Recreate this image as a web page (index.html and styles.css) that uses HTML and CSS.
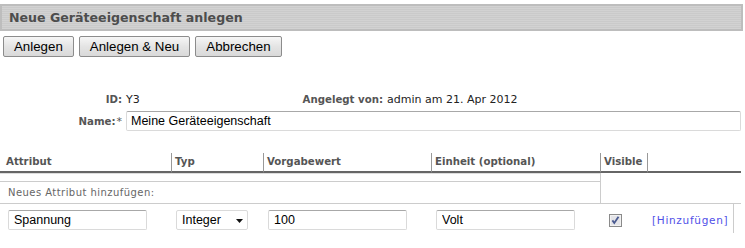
FILE: index.html
```html
<!DOCTYPE html>
<html lang="de">
<head>
    <meta charset="UTF-8">
    <title>Neue Geräteeigenschaft anlegen</title>
    <link rel="stylesheet" href="styles.css">
</head>
<body>
    <div class="title-bar">Neue Geräteeigenschaft anlegen</div>

    <div class="toolbar">
        <button class="btn">Anlegen</button>
        <button class="btn">Anlegen &amp; Neu</button>
        <button class="btn">Abbrechen</button>
    </div>

    <table class="info">
        <colgroup>
            <col style="width:126px">
            <col style="width:171px">
            <col style="width:90px">
            <col>
        </colgroup>
        <tr class="info-row">
            <th>ID:</th>
            <td>Y3</td>
            <th>Angelegt von:</th>
            <td>admin am 21. Apr 2012</td>
        </tr>
        <tr class="name-row">
            <th>Name:<span class="req">*</span></th>
            <td colspan="3"><input type="text" class="field field-wide" value="Meine Geräteeigenschaft"></td>
        </tr>
    </table>

    <table class="attrs">
        <colgroup>
            <col style="width:171px">
            <col style="width:92px">
            <col style="width:168px">
            <col style="width:169px">
            <col style="width:47px">
            <col style="width:87px">
            <col style="width:7px">
        </colgroup>
        <tr class="head">
            <th class="first">Attribut</th>
            <th>Typ</th>
            <th>Vorgabewert</th>
            <th>Einheit (optional)</th>
            <th>Visible</th>
            <th colspan="2"></th>
        </tr>
        <tr class="spacer">
            <td colspan="4"></td>
            <td class="vis-blank" rowspan="2"></td>
            <td class="blank" colspan="2" rowspan="2"></td>
        </tr>
        <tr class="new-label">
            <td colspan="4">Neues Attribut hinzufügen:</td>
        </tr>
        <tr class="new-row">
            <td class="first"><input type="text" class="field" value="Spannung"></td>
            <td>
                <span class="select-wrap">
                    <select class="select">
                        <option>Integer</option>
                        <option>String</option>
                        <option>Boolean</option>
                    </select>
                    <svg class="caret" width="7" height="4" viewBox="0 0 7 4"><path d="M0 0h7L3.5 4z" fill="#111"/></svg>
                </span>
            </td>
            <td><input type="text" class="field" value="100"></td>
            <td><input type="text" class="field" value="Volt"></td>
            <td class="vis">
                <span class="check">
                    <svg width="13" height="13" viewBox="0 0 13 13">
                        <rect x="0.5" y="0.5" width="12" height="12" fill="#d6d6d8" stroke="#8a8a8a"/>
                        <rect x="1.5" y="1.5" width="10" height="10" fill="#e4e4e8" stroke="#f2f2f2"/>
                        <path d="M3.4 6.4l1.9 2.6 4.2-6.2" fill="none" stroke="#4a5a90" stroke-width="1.8"/>
                    </svg>
                </span>
            </td>
            <td class="action"><a href="#" class="add-link">[Hinzufügen]</a></td>
            <td class="blank"></td>
        </tr>
    </table>
</body>
</html>
```
FILE: styles.css
```css
* {
    box-sizing: border-box;
}

body {
    font-family: "DejaVu Sans", Verdana, sans-serif;
    font-size: 11px;
    margin: 0;
    padding: 0;
    width: 745px;
    background: #fff;
    color: #222;
}

.title-bar {
    margin: 4px 2px 0 0;
    height: 27px;
    border: 2px solid #bdbdbd;
    background: repeating-linear-gradient(to bottom, #d2d2d2 0, #d2d2d2 1px, #cacaca 1px, #cacaca 2px);
    color: #4d4d4d;
    font-weight: bold;
    font-size: 12.6px;
    line-height: 24px;
    padding-left: 7px;
}

.toolbar {
    display: flex;
    gap: 5px;
    padding-left: 3px;
    margin-top: 5px;
}

.btn {
    font-family: "Liberation Sans", Arial, sans-serif;
    font-size: 13.3px;
    height: 21px;
    padding: 0 10px;
    border: 1px solid #8c8c8c;
    border-radius: 2px;
    background: linear-gradient(to bottom, #f6f6f6, #e4e4e4 50%, #d9d9d9);
    color: #000;
    line-height: 19px;
}

/* ID / Name block */
.info {
    table-layout: fixed;
    width: 741px;
    border-collapse: collapse;
    margin-top: 36px;
}

.info th,
.info td {
    padding: 0;
    white-space: nowrap;
}

.info th {
    text-align: right;
    padding-right: 4px;
    color: #555;
    font-weight: bold;
    font-size: 10.2px;
}

.info-row th,
.info-row td {
    height: 14px;
    line-height: 14px;
}

.name-row th,
.name-row td {
    padding-top: 4px;
}

.req {
    font-weight: normal;
    font-size: 11px;
    margin-left: 1px;
}

.field {
    font-family: "Liberation Sans", Arial, sans-serif;
    font-size: 12.5px;
    height: 20px;
    width: 139px;
    padding: 0 5px;
    border: 1px solid #dadada;
    border-top-color: #a8a8a8;
    border-radius: 2px;
    color: #000;
    background: #fff;
}

.field-wide {
    width: 615px;
    padding-left: 4px;
}

/* attribute table */
.attrs {
    table-layout: fixed;
    width: 741px;
    border-collapse: separate;
    border-spacing: 0;
    margin-top: 22px;
}

.attrs th,
.attrs td {
    padding: 0;
    white-space: nowrap;
}

.head th {
    height: 20px;
    text-align: left;
    font-weight: bold;
    font-size: 10.2px;
    color: #555;
    padding-left: 3px;
    border-left: 1px solid #999;
    border-bottom: 2px solid #666;
    line-height: 18px;
}

.head th.first {
    padding-left: 6px;
    border-left: none;
}

.spacer td {
    height: 9px;
    border-top: 1px solid #ddd;
    border-bottom: 1px solid #ccc;
}

.spacer .vis-blank {
    border-top: none;
    border-left: 1px solid #ccc;
    border-bottom: 1px solid #ccc;
}

.spacer .blank {
    border-top: none;
    border-bottom: 1px solid #ccc;
}

.new-label td {
    height: 22px;
    color: #666;
    font-size: 10px;
    letter-spacing: 0.45px;
    padding-left: 8px;
    border-bottom: 1px solid #ccc;
}

.new-row td {
    height: 29px;
    padding-left: 5px;
    padding-top: 3px;
    vertical-align: middle;
}

.new-row td.first {
    padding-left: 8px;
}

.new-row td.vis {
    padding-left: 9px;
}

.new-row td.action {
    border-right: 1px solid #ccc;
}

.new-row td.blank {
    padding: 0;
}

.check {
    display: inline-block;
    width: 13px;
    height: 13px;
    vertical-align: middle;
}

.check svg {
    display: block;
}

.select-wrap {
    position: relative;
    display: inline-block;
}

.select {
    appearance: none;
    -webkit-appearance: none;
    font-family: "Liberation Sans", Arial, sans-serif;
    font-size: 12.5px;
    width: 72px;
    height: 20px;
    padding: 0 0 0 5px;
    border: 1px solid #dadada;
    border-radius: 2px;
    background: #fff;
    color: #000;
}

.caret {
    position: absolute;
    right: 5px;
    top: 9px;
}

.add-link {
    color: #4f4fe8;
    text-decoration: none;
    font-size: 10.5px;
    letter-spacing: 0.7px;
}
```
